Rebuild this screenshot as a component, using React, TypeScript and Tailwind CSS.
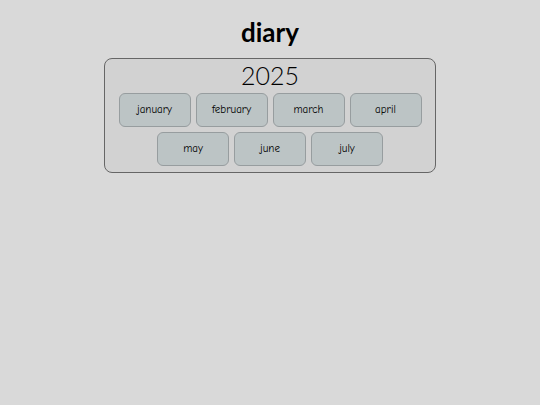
const months = [
  ["january", "february", "march", "april"],
  ["may", "june", "july"],
];

function MonthButton({ label }: { label: string }) {
  return (
    <button className="w-[72px] h-[34px] rounded-[6px] border border-[#979d9f] bg-[#bcc4c5] text-[11px] text-black [font-family:'Comic_Neue','Noto_Sans',sans-serif]">
      {label}
    </button>
  );
}

export default function App() {
  return (
    <div className="min-h-[405px] w-full bg-[#d9d9d9] flex flex-col items-center pt-[14px] [font-family:Lato,sans-serif]">
      <h1 className="text-[26px] leading-[36px] font-bold text-black">diary</h1>

      {/* Year panel */}
      <div className="mt-[8px] w-[332px] rounded-[8px] border border-[#666] bg-[#d2d2d2] flex flex-col items-center pb-[6px]">
        <div className="text-[25px] leading-[32px] font-light text-black">2025</div>
        <div className="mt-[2px] flex flex-col items-center gap-[5px]">
          {months.map((row, i) => (
            <div key={i} className="flex gap-[5px]">
              {row.map((m) => (
                <MonthButton key={m} label={m} />
              ))}
            </div>
          ))}
        </div>
      </div>
    </div>
  );
}
